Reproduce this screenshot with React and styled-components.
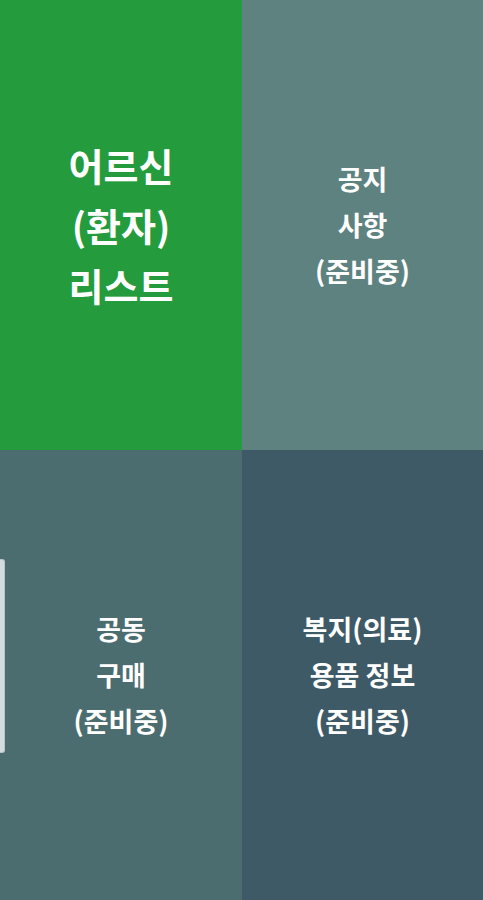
import React from "react";
import styled, { createGlobalStyle } from "styled-components";

const GlobalStyle = createGlobalStyle`
  html, body {
    margin: 0;
    padding: 0;
    height: 100%;
  }
  #root {
    height: 100%;
  }
`;

const Grid = styled.div`
  position: relative;
  display: grid;
  grid-template-columns: 242px 1fr;
  grid-template-rows: 450px 450px;
  width: 483px;
  height: 900px;
  overflow: hidden;
  font-family: "Noto Sans CJK KR", "Noto Sans", sans-serif;
`;

const Tile = styled.button`
  display: flex;
  align-items: center;
  justify-content: center;
  border: none;
  padding: 0;
  margin: 0;
  background-color: ${(p) => p.$bg};
  color: #ffffff;
  font-family: inherit;
  font-weight: 700;
  font-size: ${(p) => (p.$big ? "38px" : "27px")};
  line-height: ${(p) => (p.$big ? "60px" : "46px")};
  text-align: center;
  white-space: pre-line;
  cursor: pointer;
`;

const Handle = styled.div`
  position: absolute;
  left: 0;
  top: 559px;
  width: 4px;
  height: 192px;
  background: #d3dcdf;
  border: 1px solid #b9c4c8;
  border-left: none;
  border-radius: 0 3px 3px 0;
`;

const tiles = [
  { label: "어르신\n(환자)\n리스트", bg: "#249b3d", big: true },
  { label: "공지\n사항\n(준비중)", bg: "#5e8280" },
  { label: "공동\n구매\n(준비중)", bg: "#4c6d6f" },
  { label: "복지(의료)\n용품 정보\n(준비중)", bg: "#3e5a66" },
];

const App = () => {
  return (
    <>
      <GlobalStyle />
      <Grid>
        {tiles.map((t) => (
          <Tile key={t.label} $bg={t.bg} $big={t.big}>
            {t.label}
          </Tile>
        ))}
        <Handle />
      </Grid>
    </>
  );
};

export default App;
